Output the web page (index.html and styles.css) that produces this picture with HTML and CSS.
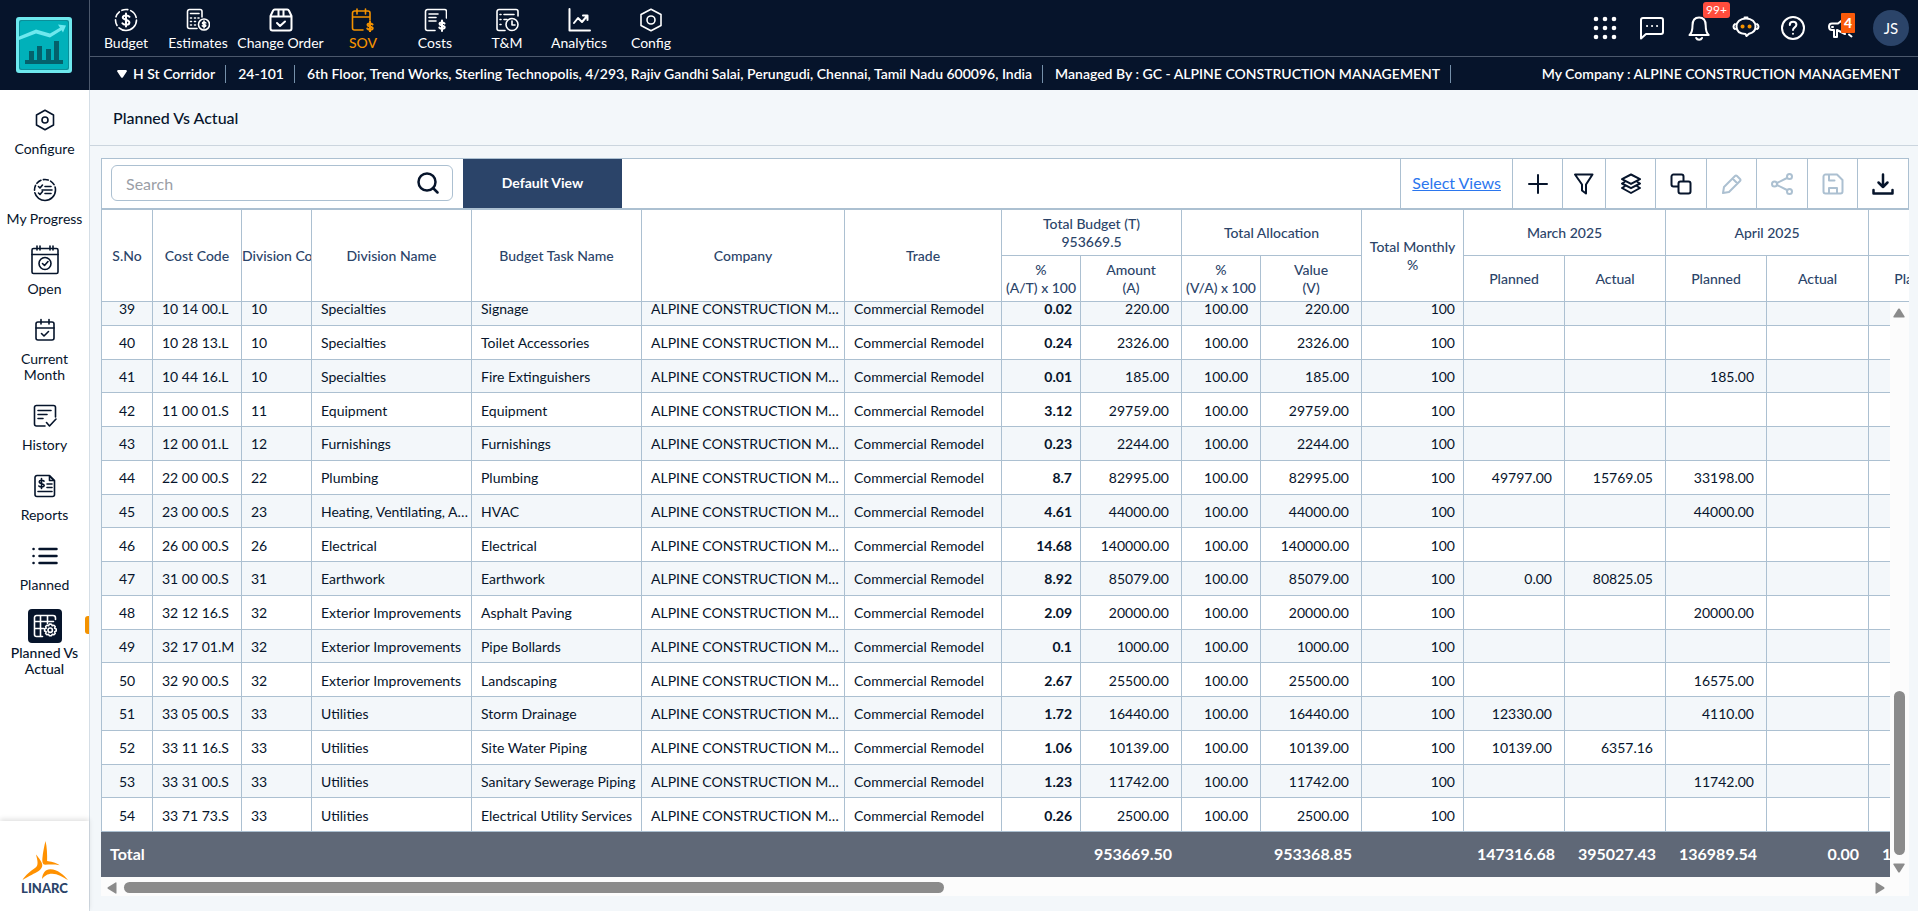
FILE: index.html
```html
<!DOCTYPE html>
<html lang="en">
<head>
    <meta charset="UTF-8">
    <meta name="viewport" content="width=device-width, initial-scale=1.0">
    <title>Planned Vs Actual</title>
    <link rel="stylesheet" href="styles.css">
</head>
<body>
    <aside class="sidebar">
        <a class="project-logo" href="#" aria-label="Project">
            <svg width="56" height="56" viewBox="0 0 56 56">
                <rect width="56" height="56" rx="3" fill="#6ee8ee"/>
                <rect x="3" y="3" width="50" height="50" rx="2" fill="#0b8f99"/>
                <rect x="4" y="4" width="48" height="48" rx="2" fill="#00b1ba"/>
                <path d="M3 19.500 20 12.500 34 16.500 46 9.500V13L34 20.500 20 16.500 3 23z" fill="#6ee8ee"/>
                <path d="M42 7.500 50 8.500 47 15.500z" fill="#6ee8ee"/>
                <path d="M13 34h5v9h3V29h5v14h4V32h5v11h3V24h5v19h4v4H9v-4h4z" fill="#04616b"/>
            </svg>
        </a>
        <nav class="side-nav">
            <a class="side-link" href="#">
                <span class="side-icon"><svg width="24" height="24" viewBox="0 0 24 24"><path d="M12 2.200 20.500 7v10L12 21.800 3.500 17V7z"/><circle cx="12" cy="12" r="3"/></svg></span>
                Configure
            </a>
            <a class="side-link" href="#">
                <span class="side-icon"><svg width="24" height="24" viewBox="0 0 24 24"><circle cx="12" cy="12" r="10.500" stroke-dasharray="30 2.500 5 2.500 5 2.500 5 2.500 5 2.500"/><path d="m5.500 8.500 1.500 1.500 2.500-3M5.500 15l1.500 1.500 2.500-3M12 8.500h6M9 12h10M12 15.500h6"/></svg></span>
                My Progress
            </a>
            <a class="side-link" href="#">
                <span class="side-icon"><svg width="30" height="30" viewBox="0 0 30 30"><rect x="2" y="3.500" width="26" height="25" rx="1.500"/><path d="M2 9.500h26M7 1v4M10 1v4M20 1v4M23 1v4"/><circle cx="15" cy="18.500" r="6"/><path d="m12.500 18.500 2 2 3.500-4"/></svg></span>
                Open
            </a>
            <a class="side-link" href="#">
                <span class="side-icon"><svg width="24" height="24" viewBox="0 0 24 24"><rect x="3" y="4" width="18" height="18" rx="2"/><path d="M3 10h18M8 1.500V6M16 1.500V6M8.500 15.500l2.500 2.500 4.500-4.500"/></svg></span>
                Current Month
            </a>
            <a class="side-link" href="#">
                <span class="side-icon"><svg width="24" height="24" viewBox="0 0 24 24"><path d="M12 22H3.500A2 2 0 0 1 1.500 20V3a2 2 0 0 1 2-1.500h17A2 2 0 0 1 22.500 3.500V13M5 6.500h13M5 10.500h9M5 14.500h5M13.500 18.500l3 3.500 6.500-7"/></svg></span>
                History
            </a>
            <a class="side-link" href="#">
                <span class="side-icon"><svg width="24" height="24" viewBox="0 0 24 24"><path d="M4 1.500h12.500l5 5V20.500a2 2 0 0 1-2 2H4a2 2 0 0 1-2-2v-17a2 2 0 0 1 2-2z"/><path d="M16.500 2v4.500H21zM5 17.500h14M14 10h5M14 13.500h5M11 7.200C9.500 5.800 6.200 6 6.200 8s5 1.300 5 3.300S7.500 13.500 5.800 12M8.500 4.500v10"/></svg></span>
                Reports
            </a>
            <a class="side-link" href="#">
                <span class="side-icon"><svg width="26" height="24" viewBox="0 0 26 24"><path class="bold" d="M7.500 5H24.500M7.500 12H24.500M7.500 19H24.500M1.500 5h.1M1.500 12h.1M1.500 19h.1"/></svg></span>
                Planned
            </a>
            <a class="side-link active" href="#">
                <span class="side-icon"><svg width="24" height="24" viewBox="0 0 24 24"><path d="M9.500 22.500H3.500A2 2 0 0 1 1.500 20.500V3.500A2 2 0 0 1 3.500 1.500H20a2.500 2.500 0 0 1 2.500 2.500v1.500M1.500 7.500h19M1.500 14.500H11M7.500 1.500v21M14.500 1.500v8"/><path d="m17 10 1.500.2.700 1.600 1.700-.600 1.300 1.300-.600 1.700 1.600.700v2.200l-1.600.700.600 1.700-1.300 1.300-1.700-.600-.700 1.600h-2.200l-.700-1.600-1.700.600-1.300-1.300.600-1.700-1.600-.700v-2.200l1.600-.700-.600-1.700 1.300-1.300 1.700.600.700-1.600z"/><circle cx="17.200" cy="16.200" r="2.200"/></svg></span>
                Planned Vs Actual
            </a>
        </nav>
        <div class="brand">
            <svg width="46" height="40" viewBox="0 0 46 40">
                <path d="M23.500 0c1.500 6 1.800 14 1.600 20 3 .5 9 1.500 12.500 4.200-5-.8-10-.6-14.500-.4-2.600 0-3-3-2.700-6.500.5-6 1.800-12 3.100-17.300z"/>
                <path d="M14 13.500c3 3.500 6 7.500 6.300 10.500.2 5-6.300 7.500-10.300 9.700-3.500 1.800-7 3.600-9.500 5.300 2.500-4.500 8-9 12.500-12 4-2.500 2.500-7.500 1-13.500z"/>
                <path d="M20 38c.5-6 3.500-10 8.500-9.800 7 .3 13 5.300 17.500 10.800-5.500-2.800-10.500-6.300-16-6.200-5 .1-7 2-10 5.200z"/>
            </svg>
            <span>LINARC</span>
        </div>
    </aside>

    <div class="page">
        <header class="topbar">
            <div class="topbar-main">
                <nav class="main-nav">
                    <a href="#"><svg width="24" height="24" viewBox="0 0 24 24"><circle cx="12" cy="12" r="10.500" stroke-dasharray="24 3 6 3 6 3 6 3 9 3"/><path class="thick" d="M15.500 8.800C14 6.800 8.800 7 8.800 9.500s6.600 2 6.600 5-5.600 3-7 .8M12 5.500v13"/></svg>Budget</a>
                    <a href="#"><svg width="24" height="24" viewBox="0 0 24 24"><path d="M11 20.500H3.500A2 2 0 0 1 1.500 18.500V3.500A2 2 0 0 1 3.500 1.500H14a2 2 0 0 1 2 2V9M4.500 5.500H13M4.500 10h1M8.500 10h1M12 10h1M4.500 13.500h1M8.500 13.500h1M4.500 17h1M8.500 17h1"/><circle cx="18" cy="16.500" r="5.500"/><path d="M19.800 15c-1-1-3.300-.9-3.300.3s3.300 1 3.300 2.300-2.600 1.300-3.500.2M18 13v7"/></svg>Estimates</a>
                    <a class="wide" href="#"><svg width="24" height="24" viewBox="0 0 24 24"><path class="thick" d="M1.500 8 4 2.800A2 2 0 0 1 6 1.500h12a2 2 0 0 1 2 1.300L22.500 8v12.500a2 2 0 0 1-2 2h-17a2 2 0 0 1-2-2zM1.500 8.500h21M9.500 1.500v7M14.500 1.500v7M8 15l3 3 5-4.500"/></svg>Change Order</a>
                    <a class="current" href="#"><svg width="24" height="24" viewBox="0 0 24 24"><path d="M12 22H3.500a2 2 0 0 1-2-2V5a2 2 0 0 1 2-2H17a2 2 0 0 1 2 2v7M1.500 9H19M6 1v5M14.500 1v5"/><path class="thick" d="M21.500 16.500c-1.500-1.500-5-1.200-5 .5s5.200 1.300 5.200 3.200-4 2-5.400.3M19 13.500V24"/></svg>SOV</a>
                    <a href="#"><svg width="24" height="24" viewBox="0 0 24 24"><path d="M12 22.500H4.500a2 2 0 0 1-2-2V3.500a2 2 0 0 1 2-2h17a2 2 0 0 1 2 2V10M6 6h9M6 9.500h7M6 13h7"/><path class="thick" d="M21.500 15.500c-1.500-1.500-5-1.200-5 .5s5.200 1.300 5.200 3.200-4 2-5.400.3M19 12.500V23"/></svg>Costs</a>
                    <a href="#"><svg width="24" height="24" viewBox="0 0 24 24"><path d="M10 22.500H4a2 2 0 0 1-2-2V3.500a2 2 0 0 1 2-2h17a2 2 0 0 1 2 2V8M5 6.500h1M5 11.500h1M5 16.500h1M9 6.500h10M9 11.500h3"/><circle cx="17" cy="16.500" r="6"/><path d="M17 13v4h3"/></svg>T&amp;M</a>
                    <a href="#"><svg width="24" height="24" viewBox="0 0 24 24"><path class="thick" d="M2.500 1v21.500H23M7 15l4-5 4 4 5-6M16 7.500h4.500V12"/></svg>Analytics</a>
                    <a href="#"><svg width="24" height="24" viewBox="0 0 24 24"><path d="M12 1.200 22 6.500v11L12 22.800 2 17.500v-11z"/><circle cx="12" cy="12" r="4"/></svg>Config</a>
                </nav>
                <div class="tools">
                    <button type="button" aria-label="Apps"><svg class="solid" width="24" height="24" viewBox="0 0 24 24"><circle cx="3" cy="3" r="2.300"/><circle cx="12" cy="3" r="2.300"/><circle cx="21" cy="3" r="2.300"/><circle cx="3" cy="12" r="2.300"/><circle cx="12" cy="12" r="2.300"/><circle cx="21" cy="12" r="2.300"/><circle cx="3" cy="21" r="2.300"/><circle cx="12" cy="21" r="2.300"/><circle cx="21" cy="21" r="2.300"/></svg></button>
                    <button type="button" aria-label="Messages"><svg width="26" height="24" viewBox="0 0 26 24"><path class="thick" d="M2 22.500V4a2 2 0 0 1 2-2h18a2 2 0 0 1 2 2v12a2 2 0 0 1-2 2H7zM8 10h.1M13 10h.1M18 10h.1"/></svg></button>
                    <button type="button" aria-label="Notifications"><svg width="24" height="26" viewBox="0 0 24 26"><path class="thick" d="M2.500 20h19.200c-2.400-2-3-4-3-9.500 0-5-2.500-8-6.600-8s-6.600 3-6.600 8c0 5.500-.6 7.500-3 9.500zM9.200 23c1 2.300 4.800 2.300 5.800 0"/></svg><span class="badge">99+</span></button>
                    <button type="button" aria-label="Assistant"><svg width="28" height="26" viewBox="0 0 28 26"><path class="thick" d="M14 3.500c6 0 9.500 3.500 9.500 8s-3 6.500-6.500 7.200L14.500 21l-1-2C8 18.700 4.500 16 4.500 11.500s3.500-8 9.500-8zM3 9C1 10.500 1 13 3 14M25 9c2 1.500 2 4 0 5M12.500 2.500h3"/><path class="eyes" d="M10.500 11.500h.1M17.500 11.500h.1"/></svg></button>
                    <button type="button" aria-label="Help"><svg width="26" height="26" viewBox="0 0 26 26"><circle class="thick" cx="13" cy="13" r="11"/><path class="thick" d="M9.800 10c0-2 1.400-3.200 3.300-3.200s3.300 1.200 3.300 3c0 2.500-3.400 2.700-3.400 5.200M13 18.700v.1"/></svg></button>
                    <button type="button" aria-label="Announcements"><svg width="26" height="24" viewBox="0 0 26 24"><path class="thick" d="M18 2 11 7.500H5C1 7.500 1 14 5 14h2v7h3v-7l8 4M6 11h-1M22 18.500l2.500 2"/></svg><span class="badge orange">4</span></button>
                    <button type="button" class="avatar">JS</button>
                </div>
            </div>
            <div class="project-bar">
                <button type="button" class="project-pick"><svg class="solid" width="10" height="8" viewBox="0 0 10 8"><path d="M1 0h8q1.500.6.600 1.800L6 7.300q-1 1-2 0L.4 1.800Q-.5.6 1 0z"/></svg>H St Corridor</button>
                <span>24-101</span>
                <span>6th Floor, Trend Works, Sterling Technopolis, 4/293, Rajiv Gandhi Salai, Perungudi, Chennai, Tamil Nadu 600096, India</span>
                <span>Managed By : GC - ALPINE CONSTRUCTION MANAGEMENT</span>
                <span class="company">My Company : ALPINE CONSTRUCTION MANAGEMENT</span>
            </div>
        </header>

        <h1 class="page-title">Planned Vs Actual</h1>

        <main class="panel">
            <div class="toolbar">
                <div class="search">
                    <input type="text" placeholder="Search" aria-label="Search">
                    <svg width="22" height="22" viewBox="0 0 22 22"><circle class="bold" cx="10" cy="10" r="8.500"/><path class="bold" d="m16 16 4.500 4.500"/></svg>
                </div>
                <button type="button" class="view-tab">Default View</button>
                <a class="select-views" href="#">Select Views</a>
                <div class="actions">
                    <button type="button" aria-label="Add"><svg width="22" height="22" viewBox="0 0 22 22"><path class="thick" d="M11 2v18M2 11h18"/></svg></button>
                    <button type="button" aria-label="Filter"><svg width="22" height="22" viewBox="0 0 22 22"><path class="thick" d="M2 1.500h17.500L13 11.500V20.500L9 17.500v-6z"/></svg></button>
                    <button type="button" aria-label="Layers"><svg width="22" height="22" viewBox="0 0 22 22"><path class="thick" d="m11 1.500 9 4.700-9 4.700-9-4.700zM4.500 9 2 10.500l9 4.700 9-4.700L17.500 9M4.500 13.500 2 15l9 5 9-5-2.500-1.500"/></svg></button>
                    <button type="button" aria-label="Copy"><svg width="22" height="22" viewBox="0 0 22 22"><path class="thick" d="M8 13.500H3.500a2 2 0 0 1-2-2v-8a2 2 0 0 1 2-2h8a2 2 0 0 1 2 2V8"/><rect class="thick" x="8.500" y="8.500" width="12" height="12" rx="2"/></svg></button>
                    <button type="button" aria-label="Edit" disabled><svg width="22" height="22" viewBox="0 0 22 22"><path class="thick" d="M3 14 14 3q1-1 2 0l3 3q1 1 0 2L8 19l-6 1zM11.500 5.500l5 5"/></svg></button>
                    <button type="button" aria-label="Share" disabled><svg width="22" height="22" viewBox="0 0 22 22"><circle class="thick" cx="3.500" cy="11" r="2.500"/><circle class="thick" cx="18.500" cy="3.500" r="2.500"/><circle class="thick" cx="18.500" cy="18.500" r="2.500"/><path class="thick" d="m6 10 10-5M6 12l10 5"/></svg></button>
                    <button type="button" aria-label="Save" disabled><svg width="22" height="22" viewBox="0 0 22 22"><path class="thick" d="M3.500 1.500H15L20.500 7v11.500a2 2 0 0 1-2 2h-15a2 2 0 0 1-2-2v-15a2 2 0 0 1 2-2zM7 2v5.500h5.500M7 20v-5h8v5"/></svg></button>
                    <button type="button" aria-label="Download"><svg width="22" height="22" viewBox="0 0 22 22"><path class="bold" d="M11 1.500v12.500M6.500 9.500 11 14l4.500-4.500M1.500 17v3.500h19v-3.500"/></svg></button>
                </div>
            </div>

            <div class="grid-head">
                <table>
                    <thead>
                        <tr>
                            <th rowspan="2">S.No</th>
                            <th rowspan="2">Cost Code</th>
                            <th rowspan="2" class="clip">Division Code</th>
                            <th rowspan="2">Division Name</th>
                            <th rowspan="2">Budget Task Name</th>
                            <th rowspan="2">Company</th>
                            <th rowspan="2">Trade</th>
                            <th colspan="2">Total Budget (T)<br>953669.5</th>
                            <th colspan="2">Total Allocation</th>
                            <th rowspan="2">Total Monthly<br>%</th>
                            <th colspan="2">March 2025</th>
                            <th colspan="2">April 2025</th>
                            <th></th>
                        </tr>
                        <tr>
                            <th>%<br>(A/T) x 100</th>
                            <th>Amount<br>(A)</th>
                            <th>%<br>(V/A) x 100</th>
                            <th>Value<br>(V)</th>
                            <th>Planned</th>
                            <th>Actual</th>
                            <th>Planned</th>
                            <th>Actual</th>
                            <th>Planned</th>
                        </tr>
                    </thead>
                </table>
            </div>

            <div class="grid-main">
                <div class="grid-cols">
                    <div class="grid-body" id="gridBody">
                        <table>
                            <tbody id="rows"></tbody>
                        </table>
                    </div>
                    <div class="grid-total">
                        <table>
                            <tbody>
                                <tr>
                                    <td colspan="7">Total</td>
                                    <td></td>
                                    <td>953669.50</td>
                                    <td></td>
                                    <td>953368.85</td>
                                    <td></td>
                                    <td>147316.68</td>
                                    <td>395027.43</td>
                                    <td>136989.54</td>
                                    <td>0.00</td>
                                    <td>124509.32</td>
                                </tr>
                            </tbody>
                        </table>
                    </div>
                    <div class="scroll-x">
                        <svg class="solid" width="10" height="12" viewBox="0 0 10 12"><path d="M9.500 1v10q0 1-1 .6L.8 6.800q-.8-.8 0-1.600L8.500.4q1-.4 1 .6z"/></svg>
                        <div class="track-x"><div class="thumb-x"></div></div>
                        <svg class="solid" width="10" height="12" viewBox="0 0 10 12"><path d="M.5 1v10q0 1 1 .6l7.700-4.800q.8-.8 0-1.600L1.500.4Q.5 0 .5 1z"/></svg>
                    </div>
                </div>
                <div class="scroll-y">
                    <svg class="solid" width="12" height="10" viewBox="0 0 12 10"><path d="M1 9.500h10q1 0 .6-1L6.800.8Q6 0 5.200.8L.4 8.500q-.4 1 .6 1z"/></svg>
                    <div class="track-y"><div class="thumb-y"></div></div>
                    <svg class="solid" width="12" height="10" viewBox="0 0 12 10"><path d="M1 .5h10q1 0 .6 1L6.800 9.200q-.8.8-1.600 0L.4 1.500Q0 .5 1 .5z"/></svg>
                </div>
            </div>
        </main>
    </div>

    <script>
        const company = 'ALPINE CONSTRUCTION MANAGEMENT';
        const trade = 'Commercial Remodel';

        // no, cost code, division name, task, % of budget, amount, March planned, March actual, April planned
        const items = [
            [39, '10 14 00.L', 'Specialties', 'Signage', '0.02', '220.00'],
            [40, '10 28 13.L', 'Specialties', 'Toilet Accessories', '0.24', '2326.00'],
            [41, '10 44 16.L', 'Specialties', 'Fire Extinguishers', '0.01', '185.00', '', '', '185.00'],
            [42, '11 00 01.S', 'Equipment', 'Equipment', '3.12', '29759.00'],
            [43, '12 00 01.L', 'Furnishings', 'Furnishings', '0.23', '2244.00'],
            [44, '22 00 00.S', 'Plumbing', 'Plumbing', '8.7', '82995.00', '49797.00', '15769.05', '33198.00'],
            [45, '23 00 00.S', 'Heating, Ventilating, Air Conditioning', 'HVAC', '4.61', '44000.00', '', '', '44000.00'],
            [46, '26 00 00.S', 'Electrical', 'Electrical', '14.68', '140000.00'],
            [47, '31 00 00.S', 'Earthwork', 'Earthwork', '8.92', '85079.00', '0.00', '80825.05'],
            [48, '32 12 16.S', 'Exterior Improvements', 'Asphalt Paving', '2.09', '20000.00', '', '', '20000.00'],
            [49, '32 17 01.M', 'Exterior Improvements', 'Pipe Bollards', '0.1', '1000.00'],
            [50, '32 90 00.S', 'Exterior Improvements', 'Landscaping', '2.67', '25500.00', '', '', '16575.00'],
            [51, '33 05 00.S', 'Utilities', 'Storm Drainage', '1.72', '16440.00', '12330.00', '', '4110.00'],
            [52, '33 11 16.S', 'Utilities', 'Site Water Piping', '1.06', '10139.00', '10139.00', '6357.16'],
            [53, '33 31 00.S', 'Utilities', 'Sanitary Sewerage Piping', '1.23', '11742.00', '', '', '11742.00'],
            [54, '33 71 73.S', 'Utilities', 'Electrical Utility Services', '0.26', '2500.00']
        ];

        const columnWidths = [51, 89, 70, 160, 170, 203, 157, 79, 101, 79, 101, 102, 101, 101, 101, 102, 101];

        // Same columns for the header, the body and the total row
        document.querySelectorAll('.panel table').forEach(table => {
            const group = document.createElement('colgroup');
            columnWidths.forEach(width => {
                const col = document.createElement('col');
                col.style.width = width + 'px';
                group.appendChild(col);
            });
            table.prepend(group);
        });

        const rows = document.getElementById('rows');
        items.forEach(([no, code, division, task, percent, amount, marPlan = '', marActual = '', aprPlan = '']) => {
            const tr = document.createElement('tr');
            const cells = [
                [no, 'center'], [code], [code.slice(0, 2)], [division], [task], [company], [trade],
                [percent, 'percent'], [amount, 'num'], ['100.00', 'num'], [amount, 'num'], ['100', 'num tight'],
                [marPlan, 'num'], [marActual, 'num'], [aprPlan, 'num'], ['', 'num'], ['', 'num']
            ];
            cells.forEach(([text, name]) => {
                const td = document.createElement('td');
                td.textContent = text;
                if (name) td.className = name;
                tr.appendChild(td);
            });
            rows.appendChild(tr);
        });

        // Open on the last rows
        const gridBody = document.getElementById('gridBody');
        gridBody.scrollTop = gridBody.scrollHeight;
    </script>
</body>
</html>
```
FILE: styles.css
```css
* {
    box-sizing: border-box;
}
body {
    display: flex;
    height: 100vh;
    margin: 0;
    font-family: Lato, sans-serif;
    font-size: 14px;
    color: #06142b;
    background-color: #f3f7fa;
    overflow: hidden;
}
a {
    color: inherit;
    text-decoration: none;
}
button {
    padding: 0;
    border: 0;
    background: none;
    font: inherit;
    color: inherit;
    cursor: pointer;
}
svg {
    flex: none;
    display: block;
    fill: none;
    stroke: currentColor;
    stroke-width: 1.6;
    stroke-linecap: round;
    stroke-linejoin: round;
}
.thick {
    stroke-width: 2;
}
.bold {
    stroke-width: 2.5;
}
.solid {
    fill: currentColor;
    stroke: none;
}

/* Sidebar */
.sidebar {
    flex: none;
    display: flex;
    flex-direction: column;
    width: 90px;
    background-color: #fff;
    border-right: 1px solid #d5dee6;
}
.project-logo {
    display: flex;
    align-items: center;
    height: 90px;
    margin-right: -1px;
    padding-left: 16px;
    background-color: #06142b;
    border-right: 1px solid #4b586c;
}
.project-logo svg {
    stroke: none;
}
.side-nav {
    flex: 1;
    display: flex;
    flex-direction: column;
    gap: 16px;
    padding-top: 13px;
}
.side-link {
    position: relative;
    display: flex;
    flex-direction: column;
    align-items: center;
    gap: 4px;
    padding: 0 10px;
    line-height: 16px;
    text-align: center;
}
.side-link:nth-child(2) {
    padding: 0;
}
.side-icon {
    display: flex;
    justify-content: center;
    align-items: center;
    width: 34px;
    height: 34px;
}
.side-link.active {
    gap: 2px;
    font-weight: 500;
}
.active .side-icon {
    color: #fff;
    background-color: #06142b;
    border-radius: 4px;
}
.side-link.active::after {
    content: "";
    position: absolute;
    top: 7px;
    right: 0;
    width: 4px;
    height: 18px;
    background-color: #f39200;
    border-radius: 3px 0 0 3px;
}
.brand {
    display: flex;
    flex-direction: column;
    align-items: center;
    height: 90px;
    padding-top: 20px;
    font-size: 13px;
    font-weight: 900;
    line-height: 14px;
    color: #2b4469;
    box-shadow: 0 -2px 5px rgba(0, 0, 0, 0.12);
}
.brand svg {
    fill: #ff9100;
    stroke: none;
}

/* Top bar */
.page {
    flex: 1;
    display: flex;
    flex-direction: column;
    min-width: 0;
}
.topbar {
    color: #fff;
    background-color: #06142b;
}
.topbar-main {
    display: flex;
    justify-content: space-between;
    height: 57px;
    border-bottom: 1px solid #4b586c;
}
.main-nav {
    display: flex;
}
.main-nav a {
    display: flex;
    flex-direction: column;
    align-items: center;
    gap: 3px;
    width: 72px;
    padding-top: 8px;
    line-height: 16px;
    white-space: nowrap;
}
.main-nav a.wide {
    width: 93px;
}
.main-nav a.current {
    color: #f39200;
    font-weight: 500;
}
.tools {
    display: flex;
    align-items: center;
    gap: 19px;
    padding-right: 9px;
}
.tools button {
    position: relative;
    display: flex;
    justify-content: center;
    width: 28px;
}
.tools .avatar {
    align-items: center;
    width: 36px;
    height: 36px;
    font-size: 15px;
    background-color: #2b4469;
    border-radius: 50%;
}
.eyes {
    stroke: #f39200;
    stroke-width: 4;
}
.badge {
    position: absolute;
    top: -13px;
    left: 18px;
    padding: 0 3px;
    font-size: 12px;
    line-height: 16px;
    background-color: #ff4d3d;
    border-radius: 3px;
}
.badge.orange {
    top: -3px;
    left: 15px;
    font-size: 14px;
    font-weight: 900;
    line-height: 20px;
    background-color: #fa5a0a;
    border-radius: 1px;
}
.project-bar {
    display: flex;
    align-items: center;
    height: 33px;
    padding: 0 8px 0 15px;
    font-weight: 600;
    line-height: 18px;
    white-space: nowrap;
}
.project-bar > * {
    padding: 0 10px 0 12px;
    border-right: 1px solid #7590aa;
}
.project-pick {
    display: flex;
    align-items: center;
    gap: 6px;
}
.project-bar .company {
    margin-left: auto;
    border: 0;
}
.page-title {
    margin: 0;
    padding: 0 23px;
    font-size: 16px;
    font-weight: 500;
    line-height: 55px;
    border-bottom: 1px solid #cbd5de;
}

/* Panel and toolbar */
.panel {
    flex: 1;
    display: flex;
    flex-direction: column;
    min-height: 0;
    margin: 12px 9px 15px 11px;
}
.toolbar {
    display: flex;
    height: 52px;
    background-color: #fff;
    border: 1px solid #acc0d1;
    border-bottom-width: 2px;
}
.search {
    display: flex;
    align-items: center;
    width: 342px;
    height: 36px;
    margin: 6px 10px 6px 9px;
    padding-right: 13px;
    border: 1px solid #acc0d1;
    border-radius: 6px;
}
.search input {
    flex: 1;
    min-width: 0;
    padding: 0 14px;
    border: 0;
    outline: 0;
    background: none;
    font: inherit;
    font-size: 16px;
}
.search input::placeholder {
    color: #9a9ea6;
}
.view-tab {
    width: 159px;
    padding-bottom: 2px;
    color: #fff;
    font-weight: 700;
    background-color: #2b4469;
}
.select-views {
    margin-left: auto;
    padding: 0 11px;
    font-size: 16px;
    line-height: 48px;
    color: #2b76ee;
    text-decoration: underline;
    border-left: 1px solid #acc0d1;
}
.actions {
    display: grid;
    grid-template-columns: 50px 43px 50px 51px 50px 51px 50px 51px;
}
.actions button {
    display: flex;
    justify-content: center;
    align-items: center;
    border-left: 1px solid #acc0d1;
}
.actions button:disabled {
    color: #acc0d1;
}

/* Grid */
table {
    width: 1868px;
    table-layout: fixed;
    border-collapse: separate;
    border-spacing: 0;
}
th,
td {
    border-right: 1px solid #acc0d1;
    border-bottom: 1px solid #acc0d1;
}
.grid-head {
    overflow: hidden;
    background-color: #fff;
    border-left: 1px solid #acc0d1;
}
th {
    height: 46px;
    padding: 0;
    font-weight: 500;
    line-height: 18px;
    color: #2b4469;
}
th.clip {
    overflow: hidden;
    white-space: nowrap;
    text-align: left;
}
.grid-main {
    flex: 1;
    display: flex;
    min-height: 0;
}
.grid-cols {
    flex: 1;
    display: flex;
    flex-direction: column;
    min-width: 0;
}
.grid-body {
    flex: 1;
    min-height: 0;
    overflow: hidden;
    border-left: 1px solid #acc0d1;
}
.grid-body table {
    height: 540px;
}
.grid-body tr {
    background-color: #fff;
}
.grid-body tr:nth-child(odd) {
    background-color: #f3f7fa;
}
.grid-body td {
    padding: 2px 3px 0 9px;
    line-height: 18px;
    white-space: nowrap;
    overflow: hidden;
    text-overflow: ellipsis;
}
.grid-body td.center {
    padding: 2px 0 0;
    text-align: center;
}
.grid-body td.num {
    padding-right: 12px;
    text-align: right;
}
.grid-body td.tight {
    padding-right: 8px;
}
.grid-body td.percent {
    padding-right: 8px;
    font-weight: 700;
    text-align: right;
}
.grid-total {
    overflow: hidden;
    background-color: #5f6877;
}
.grid-total td {
    height: 45px;
    padding: 0 9px 2px;
    border: 0;
    font-size: 16px;
    font-weight: 700;
    color: #fff;
    text-align: right;
}
.grid-total td:first-child {
    text-align: left;
}

/* Scrollbars */
.scroll-x,
.scroll-y {
    flex: none;
    display: flex;
    align-items: center;
    color: #8b8b8b;
    background-color: #fcfcfc;
}
.scroll-x {
    gap: 7px;
    height: 19px;
    padding: 2px 5px 0 6px;
}
.track-x {
    flex: 1;
}
.thumb-x {
    width: 47%;
    height: 11px;
    background-color: #8b8b8b;
    border-radius: 6px;
}
.scroll-y {
    flex-direction: column;
    gap: 8px;
    width: 19px;
    padding: 6px 1px 23px 0;
}
.track-y {
    flex: 1;
    display: flex;
    align-items: flex-end;
}
.thumb-y {
    width: 11px;
    height: 31%;
    background-color: #8b8b8b;
    border-radius: 6px;
}
```
